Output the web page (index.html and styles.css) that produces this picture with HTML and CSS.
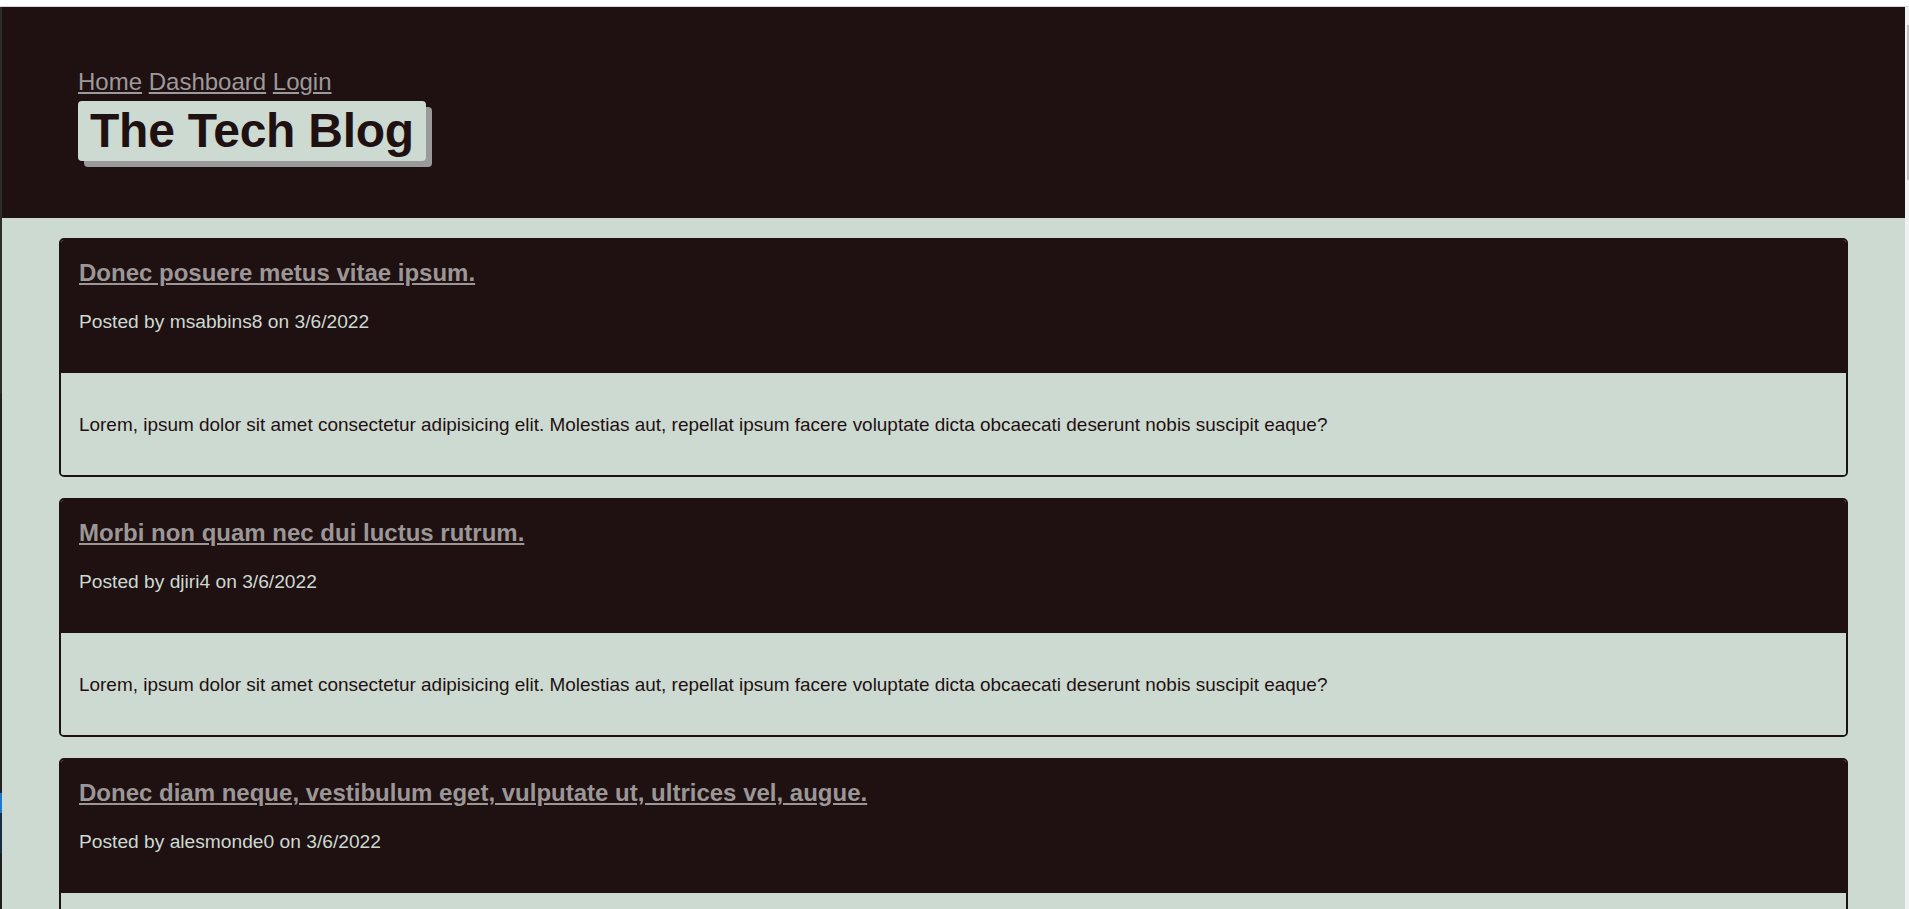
FILE: index.html
```html
<!DOCTYPE html>
<html lang="en">
<head>
<meta charset="utf-8">
<title>The Tech Blog</title>
<link rel="stylesheet" href="styles.css">
</head>
<body>
<div class="window">
  <div class="topband"></div>
  <div class="frame">
    <div class="leftstrip"></div>
    <div class="page">
      <header class="site-header">
        <nav class="nav"><a href="#">Home</a> <a href="#">Dashboard</a> <a href="#">Login</a></nav>
        <h1 class="brand">The Tech Blog</h1>
      </header>
      <main class="posts">
        <article class="post">
          <div class="post-head">
            <h2 class="post-title"><a href="#">Donec posuere metus vitae ipsum.</a></h2>
            <p class="post-meta">Posted by msabbins8 on 3/6/2022</p>
          </div>
          <div class="post-body">
            <p>Lorem, ipsum dolor sit amet consectetur adipisicing elit. Molestias aut, repellat ipsum facere voluptate dicta obcaecati deserunt nobis suscipit eaque?</p>
          </div>
        </article>
        <article class="post">
          <div class="post-head">
            <h2 class="post-title"><a href="#">Morbi non quam nec dui luctus rutrum.</a></h2>
            <p class="post-meta">Posted by djiri4 on 3/6/2022</p>
          </div>
          <div class="post-body">
            <p>Lorem, ipsum dolor sit amet consectetur adipisicing elit. Molestias aut, repellat ipsum facere voluptate dicta obcaecati deserunt nobis suscipit eaque?</p>
          </div>
        </article>
        <article class="post">
          <div class="post-head">
            <h2 class="post-title"><a href="#">Donec diam neque, vestibulum eget, vulputate ut, ultrices vel, augue.</a></h2>
            <p class="post-meta">Posted by alesmonde0 on 3/6/2022</p>
          </div>
          <div class="post-body">
            <p>Lorem, ipsum dolor sit amet consectetur adipisicing elit. Molestias aut, repellat ipsum facere voluptate dicta obcaecati deserunt nobis suscipit eaque?</p>
          </div>
        </article>
      </main>
    </div>
    <div class="scrollbar"><div class="thumb"></div></div>
  </div>
</div>
</body>
</html>
```

FILE: styles.css
```css
html, body {
  margin: 0;
  padding: 0;
  height: 100%;
  overflow: hidden;
}

body {
  font-family: "Liberation Sans", Arial, sans-serif;
  background: #ffffff;
}

.window {
  height: 100vh;
  display: flex;
  flex-direction: column;
}

.topband {
  height: 6px;
  flex: none;
  background: #ffffff;
  border-bottom: 1px solid #d6d6d6;
}

.frame {
  flex: 1;
  display: flex;
  min-height: 0;
}

.leftstrip {
  width: 2px;
  flex: none;
  background: linear-gradient(to bottom,
    #2c2c2c 0, #2c2c2c 386px,
    #222222 386px, #222222 786px,
    #1a78d0 786px, #1a78d0 806px,
    #1b2a45 806px, #1b2a45 846px,
    #1e1e1e 846px);
}

.page {
  flex: 1;
  min-width: 0;
  background: #cddad2;
  overflow: hidden;
}

.scrollbar {
  width: 4px;
  flex: none;
  background: #f1f1f1;
  padding-top: 18px;
  box-sizing: border-box;
  display: flex;
  justify-content: flex-end;
  align-items: flex-start;
}

.thumb {
  width: 2px;
  height: 155px;
  background: #c1c1c1;
}

.site-header {
  height: 211px;
  box-sizing: border-box;
  background: #1f1011;
  padding: 61px 76px 0;
}

.nav {
  font-size: 24px;
  line-height: 28px;
}

.nav a {
  color: #9c9a9a;
  text-decoration: underline;
}

.brand {
  display: inline-block;
  margin: 5px 0 0;
  padding: 2px 12px;
  font-size: 48px;
  line-height: 56px;
  font-weight: bold;
  letter-spacing: -0.25px;
  color: #1f1011;
  background: #cddad2;
  border-radius: 4px;
  box-shadow: 6px 6px 0 #9b9a9a;
}

.posts {
  padding: 20px 57px 0;
  display: flex;
  flex-direction: column;
  gap: 21px;
}

.post {
  border: 2px solid #1f1011;
  border-radius: 5px;
  overflow: hidden;
  flex: none;
}

.post-head {
  background: #1f1011;
  padding: 19px 19px 40px 18px;
}

.post-title {
  margin: 0;
  font-size: 24px;
  line-height: 28px;
  font-weight: bold;
}

.post-title a {
  color: #9c9797;
  text-decoration: underline;
}

.post-meta {
  margin: 24px 0 0;
  font-size: 19.2px;
  line-height: 22px;
  color: #cddad2;
}

.post-body {
  padding: 41px 19px 39px 18px;
  background: #cddad2;
}

.post-body p {
  margin: 0;
  font-size: 18.95px;
  line-height: 22px;
  color: #1f1011;
}
```
